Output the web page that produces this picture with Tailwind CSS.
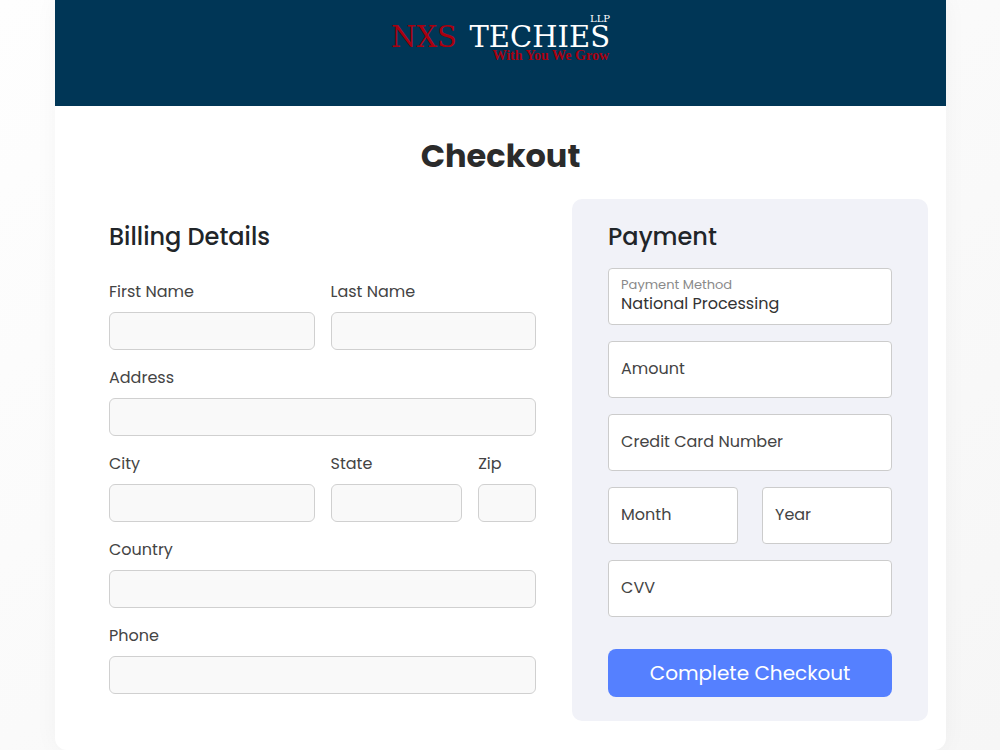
<!DOCTYPE html>
<html lang="en">
<head>
  <meta charset="UTF-8">
  <meta name="viewport" content="width=device-width, initial-scale=1.0">
  <title>Checkout - NXS Techies LLP</title>
  <!-- Tailwind CSS CDN -->
  <script src="https://cdn.jsdelivr.net/npm/@tailwindcss/browser@4"></script>
</head>
<body class="min-h-screen bg-linear-to-br from-[#fefefe] to-[#f6f6f6] font-[Poppins,Inter,sans-serif] text-[#212529]">
  <div class="mr-[54px] ml-[55px] overflow-hidden rounded-b-xl bg-white pb-[29px] shadow-[0_0_24px_rgba(0,0,0,0.04)]">
    <!-- Header -->
    <header class="flex justify-center bg-[#003656] pt-3 pb-[42px]">
      <a href="#" aria-label="NXS Techies LLP">
        <svg class="h-[52px] w-[220px] font-['DejaVu_Serif',serif]" viewBox="0 0 220 52">
          <text x="0" y="35" font-size="29" fill="#a8000f">NXS</text>
          <text x="219" y="35" font-size="29" fill="#ffffff" text-anchor="end">TECHIES</text>
          <text x="219" y="10" font-size="10" fill="#ffffff" text-anchor="end">LLP</text>
          <text class="font-['Liberation_Serif',serif]" x="218" y="48" font-size="14" font-weight="bold" fill="#a8000f" text-anchor="end">With You We Grow</text>
        </svg>
      </a>
    </header>

    <!-- Checkout Form -->
    <main>
      <h1 class="pt-[30px] pb-[23px] text-center text-[32px] leading-10 font-bold text-[#2b2b2b]">Checkout</h1>

      <form class="grid grid-cols-[6fr_5fr] gap-9 pr-[18px] pl-[54px]">
        <!-- Billing Section -->
        <section class="pt-[22px]">
          <h2 class="mb-[27px] text-2xl font-medium">Billing Details</h2>
          <div class="grid grid-cols-12 gap-4">
            <div class="col-span-6">
              <label for="first-name" class="mb-2 block text-base text-[#444]">First Name</label>
              <input id="first-name" type="text" class="block h-[38px] w-full rounded-md border border-[#d0d0d0] bg-[#f9f9f9] px-3">
            </div>
            <div class="col-span-6">
              <label for="last-name" class="mb-2 block text-base text-[#444]">Last Name</label>
              <input id="last-name" type="text" class="block h-[38px] w-full rounded-md border border-[#d0d0d0] bg-[#f9f9f9] px-3">
            </div>
            <div class="col-span-12">
              <label for="address" class="mb-2 block text-base text-[#444]">Address</label>
              <input id="address" type="text" class="block h-[38px] w-full rounded-md border border-[#d0d0d0] bg-[#f9f9f9] px-3">
            </div>
            <div class="col-span-6">
              <label for="city" class="mb-2 block text-base text-[#444]">City</label>
              <input id="city" type="text" class="block h-[38px] w-full rounded-md border border-[#d0d0d0] bg-[#f9f9f9] px-3">
            </div>
            <div class="col-span-4">
              <label for="state" class="mb-2 block text-base text-[#444]">State</label>
              <input id="state" type="text" class="block h-[38px] w-full rounded-md border border-[#d0d0d0] bg-[#f9f9f9] px-3">
            </div>
            <div class="col-span-2">
              <label for="zip" class="mb-2 block text-base text-[#444]">Zip</label>
              <input id="zip" type="text" class="block h-[38px] w-full rounded-md border border-[#d0d0d0] bg-[#f9f9f9] px-3">
            </div>
            <div class="col-span-12">
              <label for="country" class="mb-2 block text-base text-[#444]">Country</label>
              <input id="country" type="text" class="block h-[38px] w-full rounded-md border border-[#d0d0d0] bg-[#f9f9f9] px-3">
            </div>
            <div class="col-span-12">
              <label for="phone" class="mb-2 block text-base text-[#444]">Phone</label>
              <input id="phone" type="tel" class="block h-[38px] w-full rounded-md border border-[#d0d0d0] bg-[#f9f9f9] px-3">
            </div>
          </div>
        </section>

        <!-- Payment Section -->
        <section class="rounded-[10px] bg-[#f1f2f8] px-9 pt-[22px] pb-6">
          <h2 class="mb-[15px] text-2xl font-medium">Payment</h2>
          <div class="grid grid-cols-2 gap-x-6 gap-y-4">
            <!-- Floating labels sit over their fields -->
            <div class="relative col-span-2">
              <label for="method" class="pointer-events-none absolute top-2 left-[13px] text-[13px] leading-[18px] text-[#8a8a8a]">Payment Method</label>
              <select id="method" class="block h-[57px] w-full appearance-none rounded border border-[#ccc] bg-white px-3 pt-[14px] text-base text-[#333]">
                <option>National Processing</option>
              </select>
            </div>
            <div class="relative col-span-2">
              <label for="amount" class="pointer-events-none absolute top-4 left-[13px] text-base text-[#444]">Amount</label>
              <input id="amount" type="text" class="block h-[57px] w-full rounded border border-[#ccc] bg-white px-3">
            </div>
            <div class="relative col-span-2">
              <label for="card-number" class="pointer-events-none absolute top-4 left-[13px] text-base text-[#444]">Credit Card Number</label>
              <input id="card-number" type="text" class="block h-[57px] w-full rounded border border-[#ccc] bg-white px-3">
            </div>
            <div class="relative">
              <label for="month" class="pointer-events-none absolute top-4 left-[13px] text-base text-[#444]">Month</label>
              <input id="month" type="text" class="block h-[57px] w-full rounded border border-[#ccc] bg-white px-3">
            </div>
            <div class="relative">
              <label for="year" class="pointer-events-none absolute top-4 left-[13px] text-base text-[#444]">Year</label>
              <input id="year" type="text" class="block h-[57px] w-full rounded border border-[#ccc] bg-white px-3">
            </div>
            <div class="relative col-span-2">
              <label for="cvv" class="pointer-events-none absolute top-4 left-[13px] text-base text-[#444]">CVV</label>
              <input id="cvv" type="text" class="block h-[57px] w-full rounded border border-[#ccc] bg-white px-3">
            </div>
          </div>
          <button type="submit" class="mt-8 h-12 w-full rounded-lg bg-[#5580ff] text-xl text-white hover:bg-[#3f6df5]">Complete Checkout</button>
        </section>
      </form>
    </main>
  </div>
</body>
</html>
